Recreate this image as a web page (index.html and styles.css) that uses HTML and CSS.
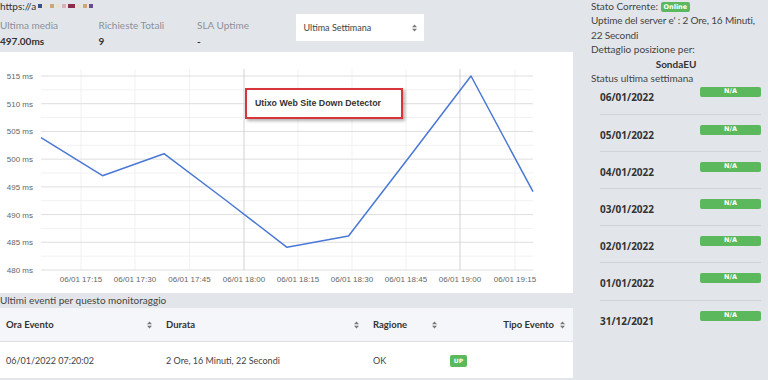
FILE: index.html
```html
<!DOCTYPE html>
<html lang="it">
<head>
  <meta charset="UTF-8" />
  <meta name="viewport" content="width=device-width, initial-scale=1.0" />
  <title>Dettaglio monitoraggio</title>
  <link rel="stylesheet" href="styles.css">
</head>
<body>
<div class="page">

  <main class="main">
    <div class="url">https://a<span class="blur">
      <i class="c1"></i><i class="c2"></i><i class="c3"></i><i class="c2"></i><i class="c4"></i><i class="c5 wide"></i><i class="c2"></i><i class="c3"></i><i class="c6"></i>
    </span></div>

    <div class="stats">
      <div class="stat">
        <div class="stat-label">Ultima media</div>
        <div class="stat-value">497.00ms</div>
      </div>
      <div class="stat">
        <div class="stat-label">Richieste Totali</div>
        <div class="stat-value">9</div>
      </div>
      <div class="stat">
        <div class="stat-label">SLA Uptime</div>
        <div class="stat-value">-</div>
      </div>
      <div class="period">
        <span>Ultima Settimana</span>
        <svg class="sort" width="5" height="8" viewBox="0 0 5 8"><path d="M0 3.3 2.5 0.5 5 3.3Z M0 4.7 2.5 7.5 5 4.7Z"/></svg>
      </div>
    </div>

    <div class="chart">
      <svg width="573" height="241" viewBox="0 0 573 241">
        <g stroke="#f1f1f1" stroke-width="1">
          <line x1="41" x2="533" y1="37.86" y2="37.86"/>
          <line x1="41" x2="533" y1="65.57" y2="65.57"/>
          <line x1="41" x2="533" y1="93.29" y2="93.29"/>
          <line x1="41" x2="533" y1="121" y2="121"/>
          <line x1="41" x2="533" y1="148.71" y2="148.71"/>
          <line x1="41" x2="533" y1="176.43" y2="176.43"/>
          <line x1="41" x2="533" y1="204.14" y2="204.14"/>
          <line x1="81" x2="81" y1="17" y2="218"/>
          <line x1="135" x2="135" y1="17" y2="218"/>
          <line x1="189.5" x2="189.5" y1="17" y2="218"/>
          <line x1="298" x2="298" y1="17" y2="218"/>
          <line x1="352" x2="352" y1="17" y2="218"/>
          <line x1="406" x2="406" y1="17" y2="218"/>
          <line x1="515" x2="515" y1="17" y2="218"/>
        </g>
        <g stroke="#dedede" stroke-width="1">
          <line x1="41" x2="533" y1="24" y2="24"/>
          <line x1="41" x2="533" y1="51.71" y2="51.71"/>
          <line x1="41" x2="533" y1="79.43" y2="79.43"/>
          <line x1="41" x2="533" y1="107.14" y2="107.14"/>
          <line x1="41" x2="533" y1="134.86" y2="134.86"/>
          <line x1="41" x2="533" y1="162.57" y2="162.57"/>
          <line x1="41" x2="533" y1="190.29" y2="190.29"/>
          <line x1="41" x2="533" y1="218" y2="218"/>
          <line x1="244" x2="244" y1="17" y2="218" stroke="#d2d2d2"/>
          <line x1="460" x2="460" y1="17" y2="218" stroke="#d2d2d2"/>
        </g>
        <g class="axis" text-anchor="end">
          <text x="33" y="27">515 ms</text>
          <text x="33" y="54.7">510 ms</text>
          <text x="33" y="82.4">505 ms</text>
          <text x="33" y="110.1">500 ms</text>
          <text x="33" y="137.9">495 ms</text>
          <text x="33" y="165.6">490 ms</text>
          <text x="33" y="193.3">485 ms</text>
          <text x="33" y="221">480 ms</text>
        </g>
        <g class="axis" text-anchor="middle">
          <text x="81" y="230">06/01 17:15</text>
          <text x="135" y="230">06/01 17:30</text>
          <text x="189.5" y="230">06/01 17:45</text>
          <text x="244" y="230">06/01 18:00</text>
          <text x="298" y="230">06/01 18:15</text>
          <text x="352" y="230">06/01 18:30</text>
          <text x="406" y="230">06/01 18:45</text>
          <text x="460" y="230">06/01 19:00</text>
          <text x="515" y="230">06/01 19:15</text>
        </g>
        <polyline fill="none" stroke="#4a78d6" stroke-width="1.5" stroke-linejoin="round"
          points="41,85.7 102.5,123.7 164,101.7 225.5,148 287,195.3 348.5,184 410,104 471,24 533,139.7"/>
      </svg>
      <div class="chart-tip">Utixo Web Site Down Detector</div>
    </div>

    <div class="events-title">Ultimi eventi per questo monitoraggio</div>
    <table class="events">
      <thead>
        <tr>
          <th class="col-ora"><div class="th-in"><span>Ora Evento</span><svg class="sort" width="5" height="8" viewBox="0 0 5 8"><path d="M0 3.3 2.5 0.5 5 3.3Z M0 4.7 2.5 7.5 5 4.7Z"/></svg></div></th>
          <th class="col-durata"><div class="th-in"><span>Durata</span><svg class="sort" width="5" height="8" viewBox="0 0 5 8"><path d="M0 3.3 2.5 0.5 5 3.3Z M0 4.7 2.5 7.5 5 4.7Z"/></svg></div></th>
          <th class="col-ragione"><div class="th-in"><span>Ragione</span><svg class="sort" width="5" height="8" viewBox="0 0 5 8"><path d="M0 3.3 2.5 0.5 5 3.3Z M0 4.7 2.5 7.5 5 4.7Z"/></svg></div></th>
          <th class="col-tipo"><div class="th-in th-right"><span>Tipo Evento</span><svg class="sort" width="5" height="8" viewBox="0 0 5 8"><path d="M0 3.3 2.5 0.5 5 3.3Z M0 4.7 2.5 7.5 5 4.7Z"/></svg></div></th>
        </tr>
      </thead>
      <tbody>
        <tr>
          <td>06/01/2022 07:20:02</td>
          <td>2 Ore, 16 Minuti, 22 Secondi</td>
          <td>OK</td>
          <td><span class="badge badge-up">UP</span></td>
        </tr>
      </tbody>
    </table>
  </main>

  <aside class="side">
    <div class="line">Stato Corrente: <span class="badge badge-online">Online</span></div>
    <div class="line uptime">Uptime del server e' : 2 Ore, 16 Minuti, 22 Secondi</div>
    <div class="line">Dettaglio posizione per:</div>
    <div class="line probe">SondaEU</div>
    <div class="line">Status ultima settimana</div>
    <ul class="days">
      <li><span class="day">06/01/2022</span><span class="na">N/A</span></li>
      <li><span class="day">05/01/2022</span><span class="na">N/A</span></li>
      <li><span class="day">04/01/2022</span><span class="na">N/A</span></li>
      <li><span class="day">03/01/2022</span><span class="na">N/A</span></li>
      <li><span class="day">02/01/2022</span><span class="na">N/A</span></li>
      <li><span class="day">01/01/2022</span><span class="na">N/A</span></li>
      <li><span class="day">31/12/2021</span><span class="na">N/A</span></li>
    </ul>
  </aside>

</div>
</body>
</html>
```

FILE: styles.css
```css
body {
  margin: 0;
  font-family: Lato, "Noto Sans", sans-serif;
  font-size: 10px;
  color: #444;
  background-color: #e2e6ea;
  overflow: hidden;
}

.page {
  display: flex;
  width: 768px;
  height: 380px;
}

.main {
  width: 573px;
  flex-shrink: 0;
}

/* url line with obfuscated host */
.url {
  height: 12px;
  line-height: 12px;
  font-size: 10px;
  color: #333;
}

.blur {
  display: inline-flex;
  gap: 2px;
  margin-left: 2px;
  vertical-align: 2px;
}

.blur i {
  display: inline-block;
  width: 4px;
  height: 4px;
}

.blur i.wide { width: 7px; }
.c1 { background: #3c4e8c; }
.c2 { background: #e8e2d0; }
.c3 { background: #c9a77a; }
.c4 { background: #d8b2b8; }
.c5 { background: #8a2f4a; }
.c6 { background: #6a4a92; }

.stats {
  display: flex;
  height: 40px;
}

.stat {
  width: 98.5px;
}

.stat-label {
  margin-top: 6px;
  line-height: 14px;
  color: #8c9196;
}

.stat-value {
  margin-top: 2px;
  line-height: 14px;
  font-weight: bold;
  color: #333;
}

.period {
  display: flex;
  align-items: center;
  justify-content: space-between;
  box-sizing: border-box;
  width: 128px;
  height: 27px;
  margin-top: 2px;
  padding: 0 7px 0 8px;
  background: #fff;
  font-size: 9px;
  color: #444;
}

.sort {
  fill: #777;
  flex-shrink: 0;
}

/* chart */
.chart {
  position: relative;
  height: 241px;
  background: #fff;
}

.chart svg {
  display: block;
}

.axis {
  font-family: "Liberation Sans", Arial, sans-serif;
  font-size: 8px;
  fill: #666;
}

.chart-tip {
  position: absolute;
  left: 245px;
  top: 36px;
  box-sizing: border-box;
  width: 158px;
  height: 31px;
  padding-left: 8px;
  border: 2px solid #d8343c;
  background: #fff;
  box-shadow: 2px 2px 3px rgba(0, 0, 0, 0.3);
  font-family: "Liberation Sans", Arial, sans-serif;
  font-size: 8.8px;
  font-weight: bold;
  line-height: 27px;
  color: #333;
}

.events-title {
  height: 15px;
  line-height: 14px;
  color: #444;
}

/* events table */
.events {
  width: 573px;
  border-collapse: collapse;
  table-layout: fixed;
}

.events th {
  height: 33px;
  padding: 0 8px 0 6px;
  background: #f4f6f9;
  border-bottom: 1px solid #dde1e5;
  font-size: 9.5px;
  font-weight: bold;
  color: #333;
  text-align: left;
}

.th-in {
  display: flex;
  align-items: center;
  justify-content: space-between;
}

.th-right {
  justify-content: flex-end;
  gap: 6px;
}

.col-ora { width: 146px; }
.col-durata { width: 193px; }
.col-ragione { width: 64px; }

.events td {
  height: 36px;
  padding: 0 6px;
  background: #fff;
  color: #444;
  font-size: 9px;
}

.badge {
  display: inline-block;
  border-radius: 2px;
  background: #5cb85c;
  color: #fff;
  font-family: "DejaVu Sans", Verdana, sans-serif;
  font-weight: bold;
  text-align: center;
}

.badge-up {
  width: 17px;
  height: 12px;
  margin-left: -1px;
  font-size: 6px;
  line-height: 12px;
  vertical-align: -1px;
}

.badge-online {
  padding: 0 3px;
  font-size: 6.5px;
  line-height: 10px;
  vertical-align: 1px;
}

/* sidebar */
.side {
  flex: 1;
  margin-top: -1px;
  padding: 0 2px 0 18px;
}

.line {
  height: 14.4px;
  line-height: 14.4px;
  color: #444;
}

.uptime {
  height: auto;
  letter-spacing: -0.15px;
}

.probe {
  text-align: center;
  font-weight: bold;
  color: #333;
  padding-right: 5px;
}

.days {
  list-style: none;
  margin: 0 5px 0 9px;
  padding: 0;
}

.days li {
  display: flex;
  justify-content: space-between;
  align-items: flex-start;
  box-sizing: border-box;
  height: 29.2px;
  margin-bottom: 8px;
  padding-top: 2px;
  border-bottom: 1px solid #cfd4d9;
}

.days li:last-child {
  border-bottom: none;
}

.day {
  margin-top: 3px;
  line-height: 14px;
  font-family: "Open Sans", sans-serif;
  font-size: 10px;
  font-weight: bold;
  color: #333;
}

.na {
  width: 61px;
  height: 10px;
  border-radius: 2px;
  background: #5cb85c;
  color: #fff;
  font-family: "DejaVu Sans", Verdana, sans-serif;
  font-size: 6.5px;
  font-weight: bold;
  line-height: 8px;
  text-align: center;
}
```
